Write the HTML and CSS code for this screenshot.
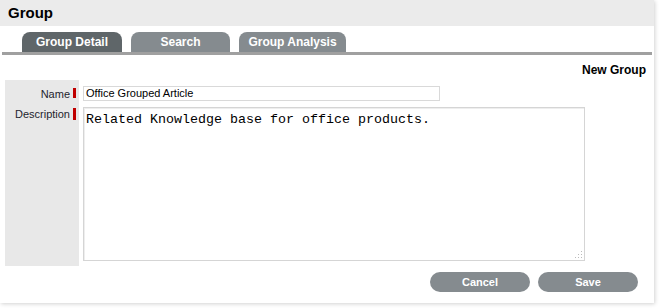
FILE: index.html
```html
<!DOCTYPE html>
<html>
<head>
<meta charset="utf-8">
<link rel="stylesheet" href="styles.css">
</head>
<body>
<div class="panel">
  <div class="header">Group</div>
  <div class="tabs">
    <div class="tab active tab-detail">Group Detail</div>
    <div class="tab tab-search">Search</div>
    <div class="tab tab-analysis">Group Analysis</div>
  </div>
  <div class="tabline"></div>
  <div class="title">New Group</div>
  <div class="form">
    <div class="labels">
      <div class="label label-name">Name<span class="req"></span></div>
      <div class="label label-desc">Description<span class="req"></span></div>
    </div>
    <div class="fields">
      <div class="input">Office Grouped Article</div>
      <div class="textarea">Related Knowledge base for office products.<span class="grip"></span></div>
    </div>
  </div>
  <div class="actions">
    <div class="btn">Cancel</div>
    <div class="btn">Save</div>
  </div>
</div>
</body>
</html>
```
FILE: styles.css
```css
html, body {
  margin: 0;
  padding: 0;
  background: #ffffff;
}
body {
  font-family: "Liberation Sans", Arial, sans-serif;
  width: 659px;
  height: 308px;
  overflow: hidden;
}
.panel {
  width: 654px;
  height: 303px;
  background: #ffffff;
  box-shadow: 1px 1px 4px rgba(0,0,0,0.18);
}
.header {
  height: 26px;
  line-height: 25px;
  background: #ebebeb;
  padding-left: 8px;
  font-weight: bold;
  font-size: 15px;
  color: #000;
}
.tabs {
  display: flex;
  gap: 9px;
  margin-top: 6px;
  padding-left: 22px;
  height: 20px;
}
.tab {
  height: 20px;
  line-height: 21px;
  border-radius: 8px 8px 0 0;
  background: #858b8f;
  color: #fff;
  font-weight: bold;
  font-size: 12px;
  text-align: center;
}
.tab.active { background: #5f6669; }
.tab-detail { width: 100px; }
.tab-search { width: 99px; }
.tab-analysis { width: 107px; }
.tabline {
  height: 3px;
  background: #a0a0a0;
  margin: 0 2px 0 2px;
}
.title {
  text-align: right;
  padding-right: 8px;
  margin-top: 8px;
  height: 17px;
  line-height: 14px;
  font-weight: bold;
  font-size: 12px;
  color: #000;
}
.form {
  display: flex;
  margin-left: 5px;
  height: 186px;
}
.labels {
  width: 74px;
  background: #e8e8e8;
  padding-top: 8px;
  box-sizing: border-box;
}
.label {
  display: flex;
  justify-content: flex-end;
  align-items: flex-start;
  font-size: 11px;
  color: #1e1e2e;
  line-height: 12px;
}
.label-name { height: 20px; }
.label-name .req { height: 10px; }
.req {
  display: inline-block;
  width: 3px;
  height: 12px;
  background: #c00000;
  margin-left: 3px;
  margin-right: 3px;
}
.fields {
  margin-left: 4px;
  padding-top: 6px;
}
.input {
  width: 353px;
  height: 13px;
  border: 1px solid #d9d9d9;
  font-size: 11px;
  line-height: 13px;
  padding-left: 2px;
  color: #000;
}
.textarea {
  position: relative;
  margin-top: 6px;
  width: 502px;
  height: 154px;
  border: 1px solid #d5d5d5;
  box-shadow: inset 1px 1px 0 #eeeeee;
  font-family: "Liberation Mono", "Courier New", monospace;
  font-size: 13.33px;
  line-height: 15px;
  padding: 4px 2px 0 2px;
  box-sizing: border-box;
  color: #000;
}
.grip {
  position: absolute;
  right: 2px;
  bottom: 2px;
  width: 8px;
  height: 8px;
  background:
    radial-gradient(circle, #bbb 0.6px, transparent 0.8px) 0 0 / 3px 3px;
  clip-path: polygon(100% 0, 100% 100%, 0 100%);
}
.actions {
  display: flex;
  justify-content: flex-end;
  gap: 8px;
  padding-right: 16px;
  margin-top: 6px;
}
.btn {
  width: 100px;
  height: 20px;
  line-height: 20px;
  border-radius: 10px;
  background: #858b8f;
  color: #fff;
  font-weight: bold;
  font-size: 11px;
  text-align: center;
}
```
